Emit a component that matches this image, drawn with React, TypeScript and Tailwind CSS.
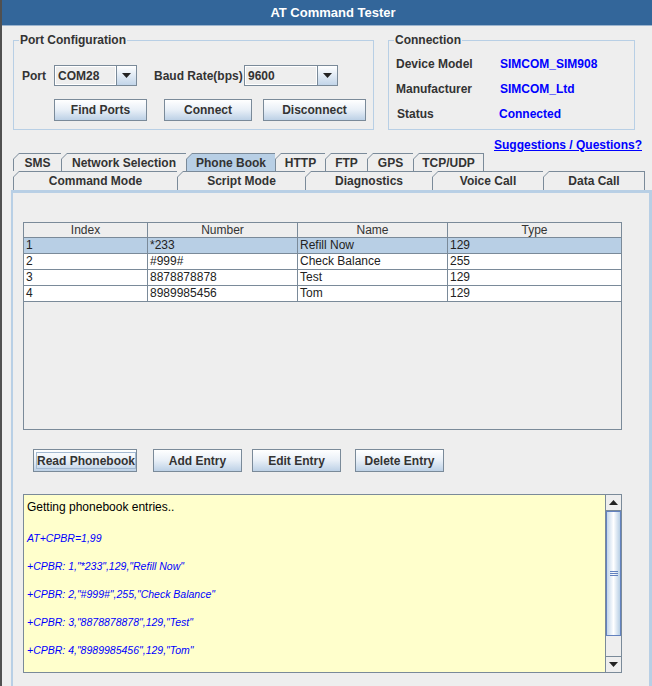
import React from 'react';

// Metal "Ocean" look of a Swing AT command tester window

const rowOneTabs = [
  { label: 'SMS', w: 'w-[48px]' },
  { label: 'Network Selection', w: 'w-[125px]' },
  { label: 'Phone Book', w: 'w-[89px]', selected: true },
  { label: 'HTTP', w: 'w-[50px]' },
  { label: 'FTP', w: 'w-[42px]' },
  { label: 'GPS', w: 'w-[46px]' },
  { label: 'TCP/UDP', w: 'w-[71px]', last: true },
];

const rowTwoTabs = [
  { label: 'Command Mode', w: 'w-[164px]' },
  { label: 'Script Mode', w: 'w-[128px]' },
  { label: 'Diagnostics', w: 'w-[127px]' },
  { label: 'Voice Call', w: 'w-[111px]' },
  { label: 'Data Call', w: 'w-[102px]', last: true },
];

const entries = [
  { index: '1', number: '*233', name: 'Refill Now', type: '129' },
  { index: '2', number: '#999#', name: 'Check Balance', type: '255' },
  { index: '3', number: '8878878878', name: 'Test', type: '129' },
  { index: '4', number: '8989985456', name: 'Tom', type: '129' },
];

const logLines = [
  'AT+CPBR=1,99',
  '+CPBR: 1,"*233",129,"Refill Now"',
  '+CPBR: 2,"#999#",255,"Check Balance"',
  '+CPBR: 3,"8878878878",129,"Test"',
  '+CPBR: 4,"8989985456",129,"Tom"',
];

interface TabProps {
  label: string;
  w: string;
  selected?: boolean;
  last?: boolean;
}

function Tab({ label, w, selected, last }: TabProps) {
  return (
    <div
      className={`${w} h-full pl-px pt-px ${last ? 'pr-px' : ''} bg-[#7a8a99] [clip-path:polygon(6px_0,100%_0,100%_100%,0_100%,0_6px)]`}
    >
      <div
        className={`h-full flex items-center justify-center font-bold ${
          selected ? 'bg-[#b8cfe5]' : 'bg-[#eeeeee]'
        } [clip-path:polygon(5px_0,100%_0,100%_100%,0_100%,0_5px)]`}
      >
        {label}
      </div>
    </div>
  );
}

function MetalButton({ label, w, h, focused }: { label: string; w: string; h: string; focused?: boolean }) {
  return (
    <button
      className={`${w} ${h} border border-[#7a8a99] bg-linear-to-b from-white via-[#e8eff7] to-[#bdd1e6] font-bold text-[#333333] flex items-stretch p-[2px] whitespace-nowrap`}
    >
      <span
        className={`flex-1 flex items-center justify-center ${focused ? 'border border-[#a3b9d1]' : ''}`}
      >
        {label}
      </span>
    </button>
  );
}

function Combo({ value, w }: { value: string; w: string }) {
  return (
    <div className={`${w} h-[21px] border border-[#7a8a99] bg-[#eeeeee] flex`}>
      <div className="flex-1 flex items-center pl-[2px] font-bold border border-white">{value}</div>
      <div className="w-[20px] border-l border-[#7a8a99] bg-linear-to-b from-white to-[#c2d5e9] flex items-center justify-center">
        <svg width="9" height="5" viewBox="0 0 9 5">
          <path d="M0 0 H9 L4.5 5 Z" fill="#222" />
        </svg>
      </div>
    </div>
  );
}

function ArrowButton({ up }: { up?: boolean }) {
  return (
    <div className={`h-[16px] bg-[#eeeeee] flex items-center justify-center ${up ? 'border-b' : 'border-t'} border-[#7a8a99]`}>
      <svg width="9" height="5" viewBox="0 0 9 5">
        <path d={up ? 'M0 5 H9 L4.5 0 Z' : 'M0 0 H9 L4.5 5 Z'} fill="#222" />
      </svg>
    </div>
  );
}

export default function App() {
  return (
    <div className="w-[652px] h-[686px] overflow-hidden bg-[#eeeeee] border-l-2 border-[#505050] flex flex-col font-['Liberation_Sans',Arial,sans-serif] text-[12px] leading-[14px] text-[#333333]">
      {/* title bar */}
      <div className="h-[26px] shrink-0 bg-[#33669a] border-b border-[#9cb4ce] flex items-center justify-center pl-[12px] text-white font-bold text-[13px]">
        AT Command Tester
      </div>

      {/* port + connection group boxes */}
      <div className="flex mt-[7px] ml-[11px] gap-[14px] shrink-0">
        <fieldset className="w-[361px] h-[97px] border border-[#b8cfe5]">
          <legend className="ml-[5px] px-[1px] font-bold leading-[14px]">Port Configuration</legend>
          <div className="pt-[18px] pl-[8px] flex flex-col gap-[13px]">
            <div className="flex items-center h-[21px]">
              <span className="w-[32px] font-bold">Port</span>
              <Combo value="COM28" w="w-[83px]" />
              <span className="w-[90px] ml-[17px] font-bold">Baud Rate(bps)</span>
              <Combo value="9600" w="w-[94px]" />
            </div>
            <div className="flex pl-[32px]">
              <MetalButton label="Find Ports" w="w-[93px]" h="h-[22px]" />
              <div className="ml-[17px]">
                <MetalButton label="Connect" w="w-[88px]" h="h-[22px]" />
              </div>
              <div className="ml-[11px]">
                <MetalButton label="Disconnect" w="w-[103px]" h="h-[22px]" />
              </div>
            </div>
          </div>
        </fieldset>

        <fieldset className="w-[247px] h-[97px] border border-[#b8cfe5]">
          <legend className="ml-[5px] px-[1px] font-bold leading-[14px]">Connection</legend>
          <div className="pt-[4px] pl-[7px] flex flex-col font-bold">
            <div className="h-[25px] flex items-center">
              <span className="w-[104px]">Device Model</span>
              <span className="text-[#0000ff]">SIMCOM_SIM908</span>
            </div>
            <div className="h-[25px] flex items-center">
              <span className="w-[104px]">Manufacturer</span>
              <span className="text-[#0000ff]">SIMCOM_Ltd</span>
            </div>
            <div className="h-[25px] flex items-center">
              <span className="w-[103px] pl-px">Status</span>
              <span className="text-[#0000ff]">Connected</span>
            </div>
          </div>
        </fieldset>
      </div>

      {/* link */}
      <div className="h-[23px] shrink-0 flex justify-end items-start pt-[8px] pr-[10px]">
        <span className="font-bold text-[#0000ff] underline">Suggestions / Questions?</span>
      </div>

      {/* tabs */}
      <div className="h-[18px] shrink-0 flex ml-[11px]">
        {rowOneTabs.map((t) => (
          <Tab key={t.label} {...t} />
        ))}
      </div>
      <div className="h-[19px] shrink-0 flex ml-[11px]">
        {rowTwoTabs.map((t) => (
          <Tab key={t.label} {...t} />
        ))}
      </div>

      {/* tab content */}
      <div className="flex-1 ml-[9px] border-t-[3px] border-l-2 border-r-[3px] border-[#b8cfe5] pt-[29px] flex flex-col">
        {/* phonebook table */}
        <div className="ml-[10px] w-[599px] h-[208px] shrink-0 border border-[#7a8a99] bg-[#eeeeee]">
          <div className="grid grid-cols-[124px_150px_150px_173px] h-[15px] border-b border-[#7a8a99]">
            {['Index', 'Number', 'Name', 'Type'].map((h, i) => (
              <div
                key={h}
                className={`text-center leading-[14px] ${i < 3 ? 'border-r border-[#7a8a99]' : ''}`}
              >
                {h}
              </div>
            ))}
          </div>
          {entries.map((e, r) => (
            <div
              key={e.index}
              className={`grid grid-cols-[124px_150px_150px_173px] h-[16px] border-b border-[#7a8a99] text-[#222222] ${
                r === 0 ? 'bg-[#b8cfe5]' : 'bg-white'
              }`}
            >
              {[e.index, e.number, e.name, e.type].map((c, i) => (
                <div
                  key={i}
                  className={`pl-[2px] leading-[15px] ${i < 3 ? 'border-r border-[#7a8a99]' : ''}`}
                >
                  {c}
                </div>
              ))}
            </div>
          ))}
        </div>

        {/* actions */}
        <div className="flex mt-[19px] ml-[20px] shrink-0">
          <MetalButton label="Read Phonebook" w="w-[104px]" h="h-[23px]" focused />
          <div className="ml-[16px]">
            <MetalButton label="Add Entry" w="w-[89px]" h="h-[23px]" />
          </div>
          <div className="ml-[10px]">
            <MetalButton label="Edit Entry" w="w-[89px]" h="h-[23px]" />
          </div>
          <div className="ml-[14px]">
            <MetalButton label="Delete Entry" w="w-[89px]" h="h-[23px]" />
          </div>
        </div>

        {/* log output */}
        <div className="mt-[22px] ml-[10px] w-[599px] h-[179px] shrink-0 border border-[#7a8a99] flex">
          <div className="flex-1 bg-[#ffffcc] pl-[3px] pt-[5px]">
            <div className="text-black leading-[14px]">Getting phonebook entries..</div>
            <div className="flex flex-col mt-[17px] gap-[14px] text-[10.5px] italic text-[#0000ff]">
              {logLines.map((l) => (
                <div key={l} className="leading-[14px]">
                  {l}
                </div>
              ))}
            </div>
          </div>
          <div className="w-[16px] border-l border-[#7a8a99] flex flex-col">
            <ArrowButton up />
            <div className="h-[125px] border border-[#6382bf] bg-linear-to-r from-[#c3d6eb] via-white to-[#b8cfe5] flex flex-col items-center justify-center gap-px">
              <div className="w-[8px] h-px bg-[#6382bf]" />
              <div className="w-[8px] h-px bg-[#6382bf]" />
              <div className="w-[8px] h-px bg-[#6382bf]" />
            </div>
            <div className="flex-1 bg-[#eeeeee]" />
            <ArrowButton />
          </div>
        </div>
      </div>
    </div>
  );
}
